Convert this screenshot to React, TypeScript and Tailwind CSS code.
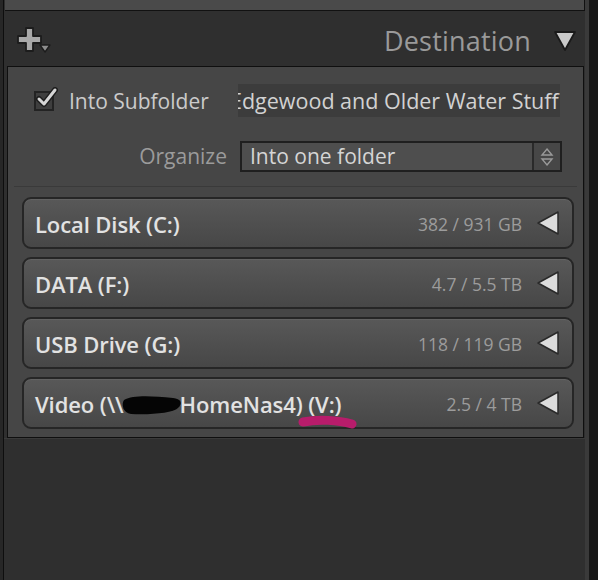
import React from "react";

const drives = [
  { name: "Local Disk (C:)", size: "382 / 931 GB" },
  { name: "DATA (F:)", size: "4.7 / 5.5 TB" },
  { name: "USB Drive (G:)", size: "118 / 119 GB" },
];

function LeftTri() {
  return (
    <svg width="24" height="26" viewBox="0 0 24 26" className="shrink-0">
      <polygon points="22,2 22,24 2,13" fill="#dcdcdc" stroke="#2a2a2a" strokeWidth="1.5" strokeLinejoin="round" />
    </svg>
  );
}

function DriveRow({ children, size }: { children: React.ReactNode; size: string }) {
  return (
    <div className="h-[52px] rounded-[9px] border-2 border-[#262626] bg-gradient-to-b from-[#585858] to-[#474747] flex items-center pl-[11px] pr-[12px] shadow-[inset_0_1px_0_#626262]">
      <div className="flex-1 text-[22px] font-semibold text-[#e2e2e2] tracking-[-0.1px] whitespace-nowrap pt-[2px]">{children}</div>
      <div className="text-[17.5px] text-[#9c9c9c] mr-[14px] pt-[2px]">{size}</div>
      <LeftTri />
    </div>
  );
}

export default function App() {
  return (
    <div
      className="w-[598px] h-[580px] bg-[#2f2f2f] flex overflow-hidden"
      style={{ fontFamily: '"Open Sans", "Noto Sans", sans-serif' }}
    >
      <div className="w-[3px] bg-[#272727]" />
      <div className="w-[1px] bg-[#0e0e0e]" />
      <div className="w-[581px] flex flex-col">
        <div className="h-[11px] ml-[1px] bg-[#4a4a4a] border-b border-r border-[#111]" />
        <div className="h-[55px] flex items-center pl-[12px] pr-[6px] pt-[4px]">
          <svg width="36" height="30" viewBox="0 0 36 30">
            <path d="M10 2h7v8h8v7h-8v8h-7v-8H2v-7h8z" fill="#a9a9a9" stroke="#1c1c1c" strokeWidth="1.8" strokeLinejoin="round" />
            <polygon points="24,19 34,19 29,26" fill="#8d8d8d" stroke="#1c1c1c" strokeWidth="1.3" strokeLinejoin="round" />
          </svg>
          <div className="flex-1 text-right text-[27px] text-[#9a9a9a] tracking-[0.2px] pr-[22px] leading-none">Destination</div>
          <svg width="24" height="24" viewBox="0 0 24 24" className="mr-[2px]">
            <polygon points="2,3 22,3 12,21" fill="#c9c9c9" stroke="#1a1a1a" strokeWidth="1.8" strokeLinejoin="round" />
          </svg>
        </div>
        <div className="h-[372px] ml-[3px] mr-[1px] bg-[#464646] border border-[#0f0f0f] flex flex-col">
          <div className="flex items-center mt-[17px] h-[33px]">
            <div className="ml-[26px] relative w-[20px] h-[20px] border-2 border-[#232323] bg-[#3e3e3e]">
              <svg width="24" height="22" viewBox="0 0 24 22" className="absolute -top-[6px] left-[0px]">
                <path d="M3 12l5 5 11-14" fill="none" stroke="#1d1d1d" strokeWidth="6" strokeLinecap="round" strokeLinejoin="round" />
                <path d="M3 12l5 5 11-14" fill="none" stroke="#d6d6d6" strokeWidth="3" strokeLinecap="round" strokeLinejoin="round" />
              </svg>
            </div>
            <div className="ml-[15px] text-[21px] text-[#cbcbcb] w-[169px] whitespace-nowrap pt-[3px]">Into Subfolder</div>
            <div className="w-[322px] h-[33px] bg-[#3c3c3c] overflow-hidden flex items-center">
              <div className="text-[21.5px] text-[#d2d2d2] whitespace-nowrap -ml-[8px] pt-[1px]">Edgewood and Older Water Stuff</div>
            </div>
          </div>
          <div className="flex items-center mt-[24px] h-[31px]">
            <div className="w-[219px] text-right text-[21px] text-[#9b9b9b]">Organize</div>
            <div className="ml-[13px] w-[322px] h-[31px] border-2 border-[#1f1f1f] bg-[#4e4e4e] flex items-center">
              <div className="flex-1 pl-[8px] text-[21px] text-[#d5d5d5] whitespace-nowrap">Into one folder</div>
              <div className="w-[28px] h-full border-l-2 border-[#2a2a2a] bg-[#474747] flex items-center justify-center">
                <svg width="14" height="22" viewBox="0 0 14 22">
                  <polygon points="7,3 12,9 2,9" fill="none" stroke="#9a9a9a" strokeWidth="1.4" />
                  <polygon points="7,19 12,13 2,13" fill="none" stroke="#9a9a9a" strokeWidth="1.4" />
                </svg>
              </div>
            </div>
          </div>
          <div className="mt-[14px] h-[1px] bg-[#3a3a3a] mx-[6px]" />
          <div className="flex flex-col gap-[8px] mt-[10px] ml-[14px] mr-[9px]">
            {drives.map((d) => (
              <DriveRow key={d.name} size={d.size}>
                {d.name}
              </DriveRow>
            ))}
            <DriveRow size="2.5 / 4 TB">
              <span>Video (\\</span>
              <span className="inline-block relative w-[56px] h-[1em] align-middle">
                <svg width="62" height="24" viewBox="0 0 62 24" className="absolute -left-[3px] -top-[2px]">
                  <path d="M3 6 C12 1, 30 2, 52 4 C60 5, 62 9, 57 14 C52 19, 30 21, 10 20 C2 19, 0 10, 3 6 Z" fill="#050505" />
                </svg>
              </span>
              <span>HomeNas4) </span>
              <span className="relative">
                (V:)
                <svg width="60" height="18" viewBox="0 0 60 18" className="absolute -left-[10px] top-[25px]">
                  <path d="M5 8 C20 5, 40 6, 54 10" fill="none" stroke="#b81c6b" strokeWidth="9" strokeLinecap="round" />
                </svg>
              </span>
            </DriveRow>
          </div>
        </div>
        <div className="h-[1px] bg-[#3a3a3a]" />
      </div>
      <div className="w-[4px] bg-[#3a3a3a]" />
      <div className="flex-1 bg-[#171717]" />
    </div>
  );
}
